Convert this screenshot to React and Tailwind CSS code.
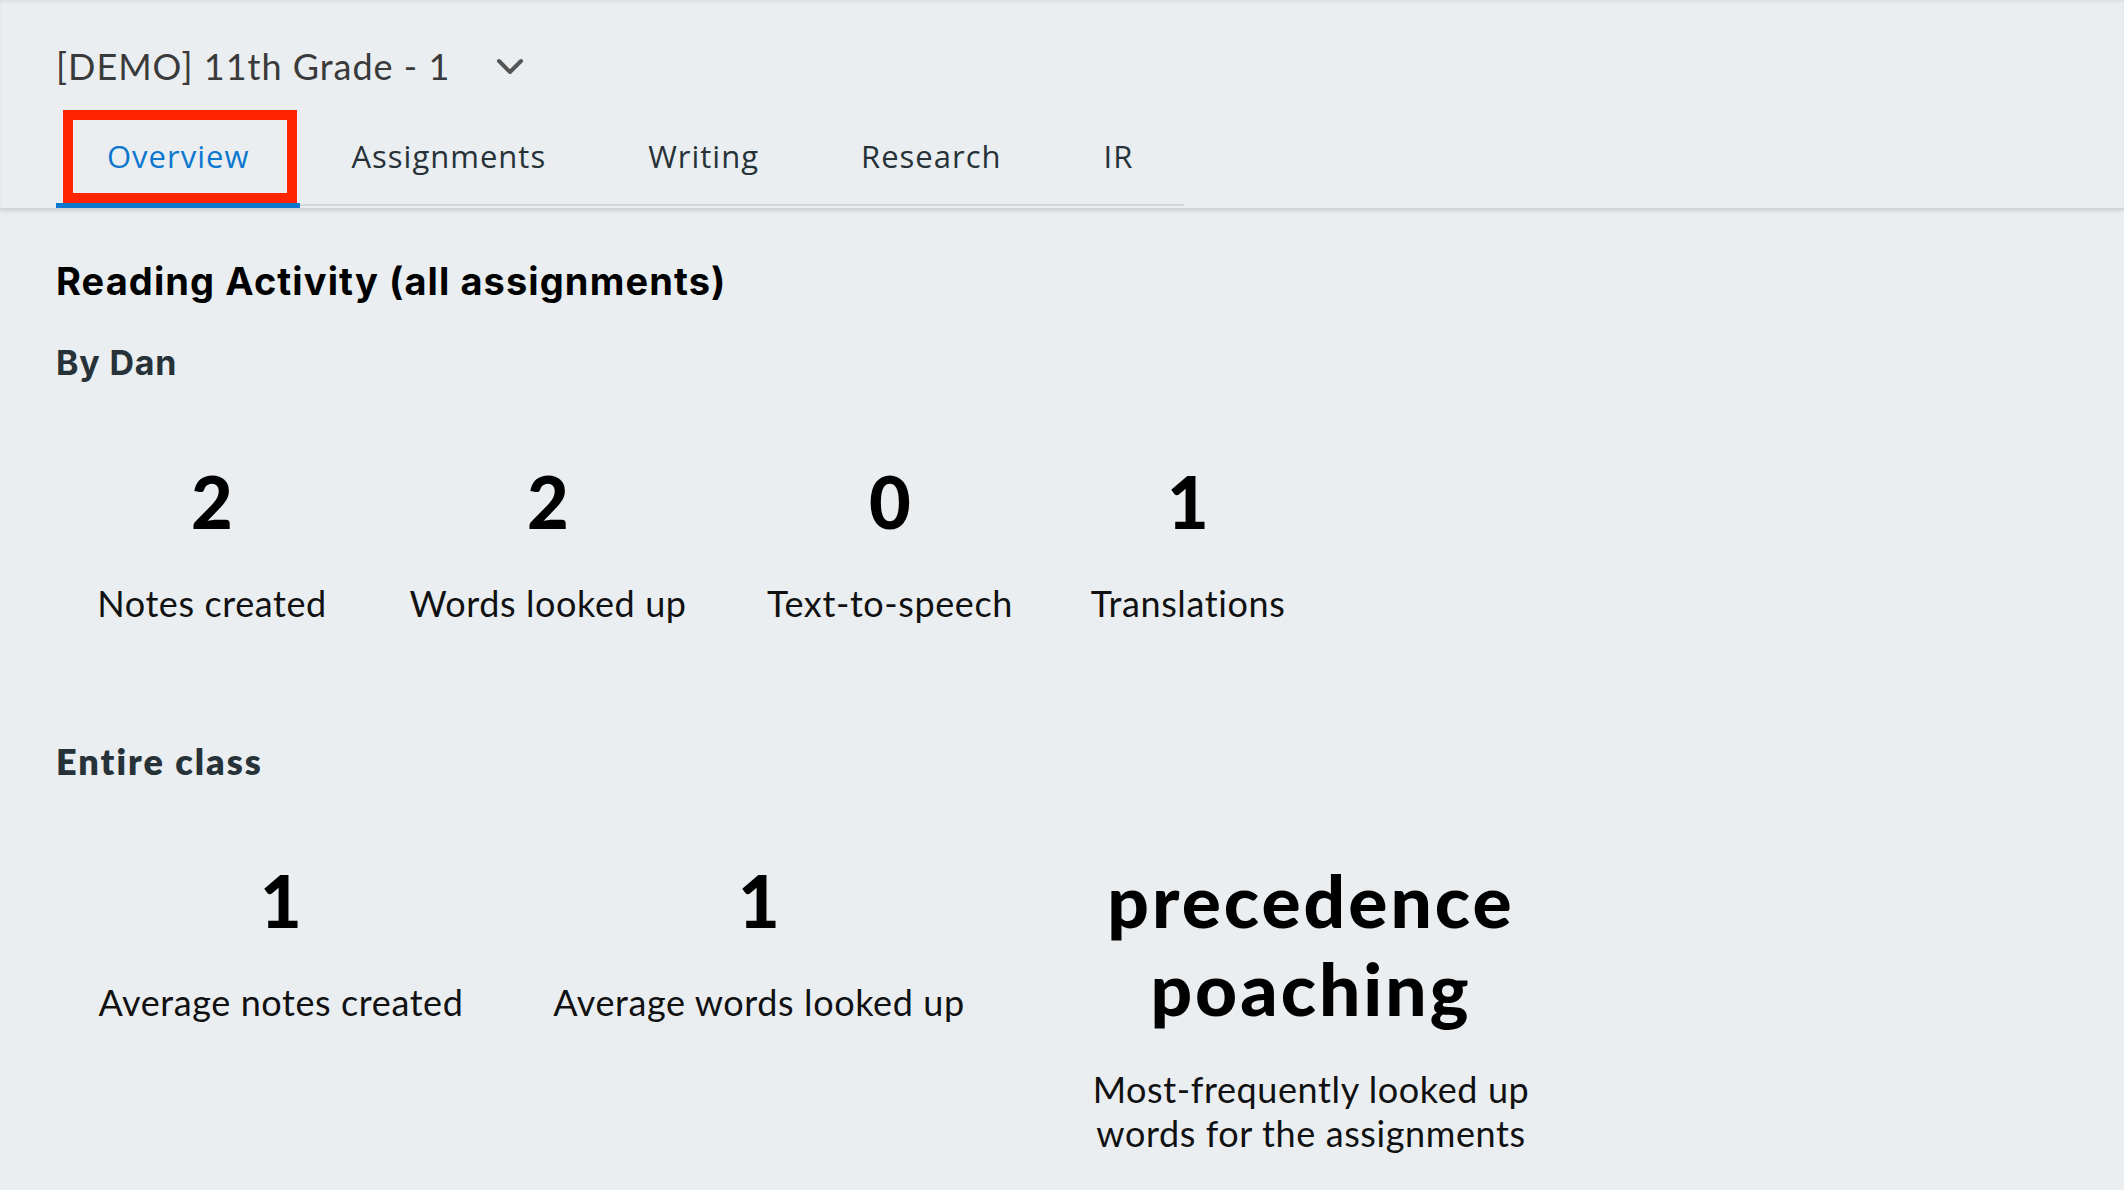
import React from "react";

const row1 = [
  { n: "2", label: "Notes created", w: "w-[312px]" },
  { n: "2", label: "Words looked up", w: "w-[360px]" },
  { n: "0", label: "Text-to-speech", w: "w-[324px]" },
  { n: "1", label: "Translations", w: "w-[272px]" },
];

const tabs = ["Overview", "Assignments", "Writing", "Research", "IR"];

function Stat({ n, label, w }) {
  return (
    <div className={`${w} flex flex-col items-center text-center`}>
      <div className="font-[family-name:Lato,sans-serif] font-black text-[72px] leading-[88px] text-black">
        {n}
      </div>
      <div className="mt-[36px] font-[family-name:Lato,sans-serif] font-normal text-[36px] leading-[44px] tracking-[0.6px] text-[#111] whitespace-nowrap">
        {label}
      </div>
    </div>
  );
}

export default function App() {
  return (
    <div className="min-h-screen bg-[#eaeef1]">
      <header className="relative z-10 pl-[56px] pt-[44px] pb-[2px] border-b border-[#cfd4d8] shadow-[0_2px_4px_rgba(0,0,0,0.12),inset_0_2px_3px_rgba(0,0,0,0.06)]">
        <div className="flex items-center h-[44px]">
          <span className="font-[family-name:Lato,sans-serif] text-[36px] leading-[44px] text-[#3a3a3a] tracking-[1px]">
            [DEMO] 11th Grade - 1
          </span>
          <svg
            className="ml-[46px] mt-[2px]"
            width="28"
            height="18"
            viewBox="0 0 28 18"
            fill="none"
          >
            <polyline
              points="3,3 14,14 25,3"
              stroke="#555"
              strokeWidth="4"
              strokeLinecap="round"
              strokeLinejoin="round"
            />
          </svg>
        </div>
        <nav className="mt-[16px] flex w-fit border-b-2 border-[#cfd8dc]">
          {tabs.map((t, i) => (
            <div
              key={t}
              className={`relative px-[51px] pt-[32px] pb-[28px] font-[family-name:'Open_Sans',sans-serif] text-[31px] leading-[40px] tracking-[1px] ${
                i === 0 ? "text-[#0b77cf]" : "text-[#263238]"
              }`}
            >
              {t}
              {i === 0 && (
                <>
                  <span className="absolute left-0 right-0 -bottom-[4px] h-[5px] bg-[#0b77cf]" />
                  <span className="absolute left-[7px] right-[3px] top-[6px] bottom-[1px] border-[10px] border-[#fe2400]" />
                </>
              )}
            </div>
          ))}
        </nav>
      </header>

      <main className="pl-[56px] pt-[50px] pb-[40px]">
        <h1 className="font-[family-name:Inter,sans-serif] font-bold text-[38px] leading-[44px] tracking-[1.1px] text-black">
          Reading Activity (all assignments)
        </h1>
        <h2 className="mt-[40px] font-[family-name:Inter,sans-serif] font-bold text-[34px] leading-[40px] tracking-[0.8px] text-[#263238]">
          By Dan
        </h2>

        <div className="mt-[74px] flex items-start">
          {row1.map((s, i) => (
            <Stat key={i} {...s} />
          ))}
        </div>

        <h2 className="mt-[116px] font-[family-name:Lato,sans-serif] font-extrabold text-[36px] leading-[40px] tracking-[2px] text-[#263238]">
          Entire class
        </h2>

        <div className="mt-[75px] flex items-start">
          <Stat n="1" label="Average notes created" w="w-[450px]" />
          <Stat n="1" label="Average words looked up" w="w-[506px]" />
          <div className="w-[598px] flex flex-col items-center text-center">
            <div className="font-[family-name:Lato,sans-serif] font-black text-[73px] leading-[88px] tracking-[3px] text-black">
              <div>precedence</div>
              <div>poaching</div>
            </div>
            <div className="mt-[35px] font-[family-name:Lato,sans-serif] font-normal text-[36px] leading-[44px] tracking-[0.6px] text-[#111]">
              Most-frequently looked up
              <br />
              words for the assignments
            </div>
          </div>
        </div>
      </main>
    </div>
  );
}
